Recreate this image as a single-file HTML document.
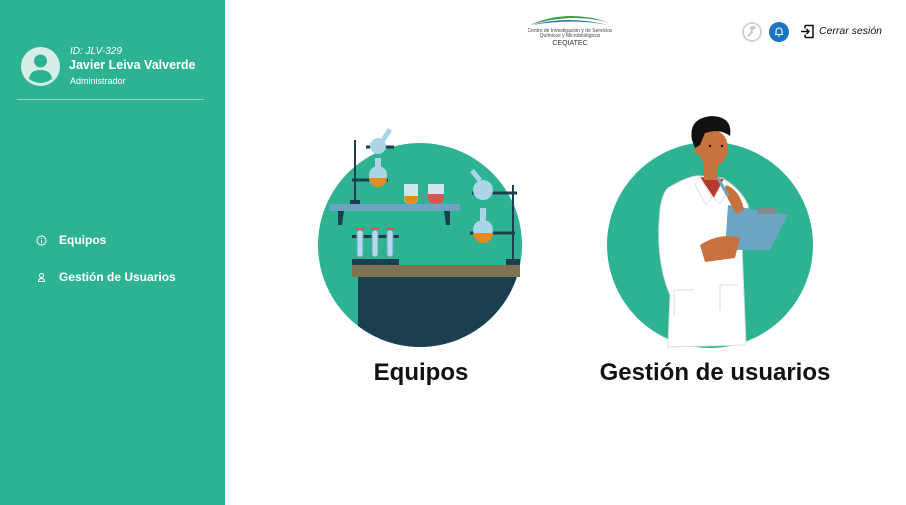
<!DOCTYPE html>
<html><head><meta charset="utf-8"><style>
*{margin:0;padding:0;box-sizing:border-box}
body{width:906px;height:505px;overflow:hidden;background:#fff;font-family:"Liberation Sans",sans-serif;position:relative}
.side{position:absolute;left:0;top:0;width:225px;height:505px;background:#2eb392;color:#fff}
.abs{position:absolute}
</style></head><body>
<div class="side">
  <svg class="abs" style="left:21px;top:47px" width="39" height="39" viewBox="0 0 39 39">
    <circle cx="19.5" cy="19.5" r="19.5" fill="#d5efe8"/>
    <circle cx="19.5" cy="14" r="6.5" fill="#2eb392"/>
    <path d="M8 32 Q9 23 19.5 23 Q30 23 31 32 Q25 36 19.5 36 Q14 36 8 32Z" fill="#2eb392"/>
  </svg>
  <div class="abs" style="left:70px;top:46px;font-size:10px;font-style:italic">ID: JLV-329</div>
  <div class="abs" style="left:69px;top:58px;font-size:12.5px;font-weight:bold">Javier Leiva Valverde</div>
  <div class="abs" style="left:70px;top:76px;font-size:9px">Administrador</div>
  <div class="abs" style="left:17px;top:99px;width:187px;height:1px;background:#8fd6c3"></div>
  <svg class="abs" style="left:36px;top:235px" width="11" height="11" viewBox="0 0 11 11"><circle cx="5.5" cy="5.5" r="4.5" fill="none" stroke="#fff" stroke-width="1"/><path d="M5.5 3v1M5.5 5v3" stroke="#fff" stroke-width="1"/></svg>
  <div class="abs" style="left:59px;top:233px;font-size:12px;font-weight:bold">Equipos</div>
  <svg class="abs" style="left:36px;top:272px" width="11" height="11" viewBox="0 0 11 11"><circle cx="5.5" cy="3.5" r="2" fill="none" stroke="#fff"/><path d="M2 9.5h7M2.5 9.5q0-3 3-3t3 3" fill="none" stroke="#fff"/></svg>
  <div class="abs" style="left:59px;top:270px;font-size:12px;font-weight:bold">Gestión de Usuarios</div>
</div>

<svg class="abs" style="left:528px;top:12px" width="84" height="36" viewBox="0 0 84 36">
  <path d="M2 13 Q40 -4 82 11 Q45 0 2 13Z" fill="#3a9c3a"/>
  <path d="M4 13 Q40 3 80 13 Q45 6 4 13Z" fill="#1c6fb3"/>
  <text x="42" y="20" font-size="5" text-anchor="middle" fill="#444">Centro de Investigación y de Servicios</text>
  <text x="42" y="25" font-size="5" text-anchor="middle" fill="#444">Químicos y Microbiológicos</text>
  <text x="42" y="33" font-size="7" text-anchor="middle" fill="#333">CEQIATEC</text>
</svg>
<svg class="abs" style="left:742px;top:22px" width="20" height="20" viewBox="0 0 20 20"><circle cx="10" cy="10" r="9" fill="none" stroke="#d0d0d0" stroke-width="1.8"/><path d="M6 14l4.5-4.5" stroke="#ccc" stroke-width="2.2"/><path d="M10 9.5a3 3 0 1 1 4-3l-2 .5z" fill="#ccc"/></svg>
<svg class="abs" style="left:769px;top:22px" width="20" height="20" viewBox="0 0 20 20"><circle cx="10" cy="10" r="10" fill="#1a75c2"/><path d="M7 12.5V9a3 3 0 0 1 6 0v3.5zM6 12.5h8M9 14h2" stroke="#fff" stroke-width="1.1" fill="none"/></svg>
<svg class="abs" style="left:800px;top:24px" width="15" height="15" viewBox="0 0 15 15"><path d="M5 1.5h8v12H5M5 1.5v3M5 10.5v3M1 7.5h8M6.5 5l2.5 2.5-2.5 2.5" fill="none" stroke="#111" stroke-width="1.5"/></svg>
<div class="abs" style="left:819px;top:25px;font-size:10.5px;font-style:italic;color:#111">Cerrar sesión</div>

<svg class="abs" style="left:310px;top:120px" width="220" height="230" viewBox="310 120 220 230">
  <defs><clipPath id="c1"><circle cx="420" cy="245" r="102"/></clipPath></defs>
  <circle cx="420" cy="245" r="102" fill="#2eb392"/>
  <g clip-path="url(#c1)">
    <rect x="358" y="276" width="170" height="80" fill="#1b3f4f"/>
  </g>
  <rect x="352" y="265" width="168" height="12" fill="#7d7352"/>
  <rect x="330" y="204" width="130" height="7" fill="#6aa6c4"/>
  <path d="M338 211h6l-2 14h-4zM444 211h6v14h-4z" fill="#1b3f4f"/>
  <rect x="352" y="259" width="47" height="6" fill="#1b3f4f"/>
  <rect x="352" y="235" width="47" height="3" fill="#1b3f4f"/>
  <g fill="#b5dbe9" stroke="#6aa6c4" stroke-width="1"><rect x="357" y="230" width="6" height="27" rx="3"/><rect x="372" y="230" width="6" height="27" rx="3"/><rect x="387" y="230" width="6" height="27" rx="3"/></g>
  <path d="M356 229h8M371 229h8M386 229h8" stroke="#d9534f" stroke-width="2"/>
  <rect x="354" y="140" width="2" height="62" fill="#1b3f4f"/><rect x="350" y="200" width="10" height="4" fill="#1b3f4f"/>
  <path d="M352 180h36M366 147h28" stroke="#1b3f4f" stroke-width="3"/>
  <circle cx="378" cy="175" r="9" fill="#a9d5e6"/><rect x="375" y="158" width="6" height="10" fill="#a9d5e6"/>
  <path d="M369 178a9 9 0 0 0 18 0z" fill="#e8891c"/>
  <circle cx="378" cy="146" r="8" fill="#a9d5e6"/><path d="M380 140l8-12 4 3-8 12z" fill="#a9d5e6"/>
  <path d="M404 184h14v14q0 6-7 6t-7-6z" fill="#cde6ef"/><path d="M404 196h14q0 8-7 8t-7-8z" fill="#e8891c"/>
  <path d="M428 184h16v14q0 6-8 6t-8-6z" fill="#cde6ef"/><path d="M428 194h16v4q0 6-8 6t-8-6z" fill="#d9534f"/>
  <rect x="512" y="185" width="2" height="80" fill="#1b3f4f"/><rect x="506" y="259" width="14" height="6" fill="#1b3f4f"/>
  <path d="M472 193h45M470 233h45" stroke="#1b3f4f" stroke-width="3"/>
  <circle cx="483" cy="190" r="10" fill="#a9d5e6"/><path d="M478 182l-8-10 4-3 8 10z" fill="#a9d5e6"/>
  <circle cx="483" cy="230" r="10" fill="#a9d5e6"/><rect x="480" y="208" width="6" height="14" fill="#a9d5e6"/>
  <path d="M473 233a10 10 0 0 0 20 0z" fill="#e8891c"/>
</svg>

<svg class="abs" style="left:600px;top:110px" width="220" height="240" viewBox="600 110 220 240">
  <circle cx="710" cy="245" r="103" fill="#2eb392"/>
  <path d="M668 188 Q690 175 700 176 L722 178 Q740 188 748 205 L750 240 L742 248 L746 345 L668 347 L670 295 Q655 260 660 210 Q662 194 668 188Z" fill="#fff" stroke="#ddd" stroke-width="1"/>
  <path d="M700 177 L724 179 L714 198Z" fill="#b53a2e"/>
  <path d="M700 177 L712 198 L706 205 L695 185Z M724 179 L714 198 L720 204 L730 188Z" fill="#fff" stroke="#ddd" stroke-width="0.8"/>
  <path d="M674 290h20M720 285h18M674 290v25M720 285v25" stroke="#ddd" stroke-width="1" fill="none"/>
  <rect x="704" y="160" width="14" height="20" fill="#c97240"/>
  <ellipse cx="713" cy="148" rx="15" ry="18" fill="#c97240"/>
  <ellipse cx="697" cy="150" rx="3" ry="4" fill="#c97240"/>
  <path d="M692 140 Q688 118 712 116 Q733 117 730 136 Q720 128 705 133 L700 145 L695 148Z" fill="#111"/>
  <circle cx="710" cy="146" r="1.2" fill="#111"/><circle cx="722" cy="146" r="1.2" fill="#111"/>
  <path d="M728 205 L788 215 L770 250 L725 250Z" fill="#6aa6c4"/>
  <rect x="758" y="208" width="18" height="6" fill="#888"/>
  <path d="M700 245 Q720 232 740 238 L735 258 L705 262Z" fill="#c97240"/>
  <path d="M726 185 Q740 190 744 210 L736 214 Q728 200 724 190Z" fill="#c97240"/>
  <path d="M718 178l10 18" stroke="#6aa6c4" stroke-width="3"/>
</svg>

<div class="abs" style="left:321px;top:359px;width:200px;text-align:center;font-size:24px;font-weight:bold;color:#111">Equipos</div>
<div class="abs" style="left:580px;top:359px;width:270px;text-align:center;font-size:24px;font-weight:bold;color:#111">Gestión de usuarios</div>
</body></html>
